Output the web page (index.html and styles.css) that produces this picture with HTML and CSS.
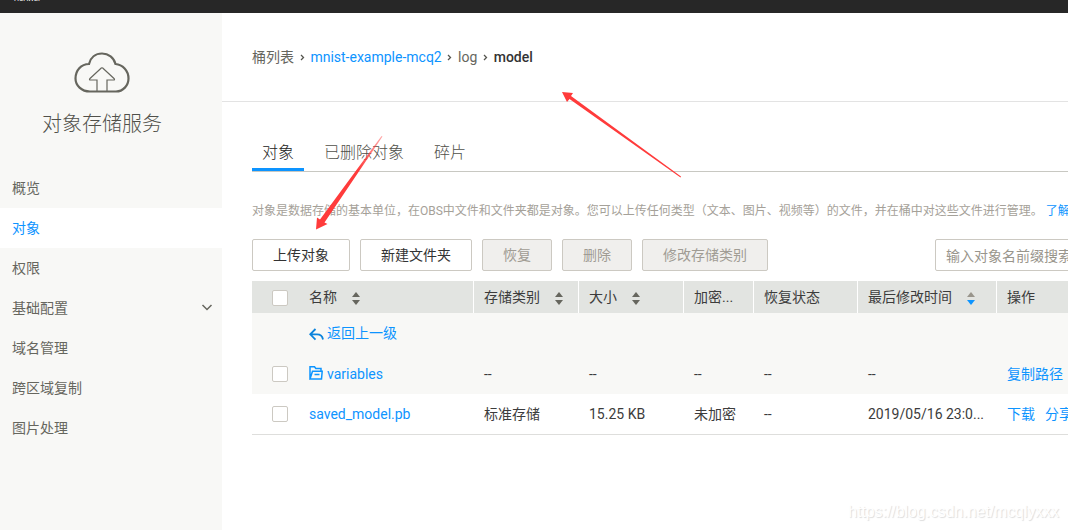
FILE: index.html
```
<!DOCTYPE html>
<html lang="zh-CN">
<head>
    <meta charset="UTF-8">
    <meta name="viewport" content="width=device-width, initial-scale=1.0">
    <title>对象存储服务</title>
    <link rel="stylesheet" href="styles.css">
</head>
<body>
    <header class="topbar"><span class="brand">HUAWEI</span></header>
    <div class="layout">
        <aside class="sidebar">
            <div class="service">
                <svg class="service-icon" width="58" height="44" viewBox="0 0 58 44" fill="none" stroke="#66665e">
                    <path d="M17 40.500h26C50 40.500 55.500 34.500 55.500 27.500C55.500 19.500 49.500 13.500 42.500 13C41 6.500 35.500 2.500 29 2.500S17.500 6.500 16 13C8 13 2.500 19.500 2.500 27.500C2.500 34.500 8.500 40.500 17 40.500z" stroke-width="2.200"/>
                    <path d="M24 40V29h-7q-1-.5 0-1.500L28.300 17q.7-.5 1.400 0L41 27.500q1 1 0 1.500H34v11" stroke-width="1.200"/>
                </svg>
                <h1>对象存储服务</h1>
            </div>
            <nav class="menu">
                <a class="menu-item">概览</a>
                <a class="menu-item active">对象</a>
                <a class="menu-item">权限</a>
                <a class="menu-item">基础配置
                    <svg width="12" height="8" viewBox="0 0 12 8" fill="none" stroke="#66665e" stroke-width="1.500"><path d="M1.500 1L6 5.500l4.500-4.500"/></svg>
                </a>
                <a class="menu-item">域名管理</a>
                <a class="menu-item">跨区域复制</a>
                <a class="menu-item">图片处理</a>
            </nav>
        </aside>
        <main class="content">
            <div class="breadcrumb">
                <span>桶列表</span>
                <svg class="sep" width="5" height="7" viewBox="0 0 5 7"><path d="M1 1l2.500 2.500L1 6"/></svg>
                <a class="link">mnist-example-mcq2</a>
                <svg class="sep" width="5" height="7" viewBox="0 0 5 7"><path d="M1 1l2.500 2.500L1 6"/></svg>
                <span>log</span>
                <svg class="sep" width="5" height="7" viewBox="0 0 5 7"><path d="M1 1l2.500 2.500L1 6"/></svg>
                <span class="current">model</span>
            </div>
            <div class="panel">
                <div class="tabs">
                    <a class="tab active">对象</a>
                    <a class="tab">已删除对象</a>
                    <a class="tab">碎片</a>
                </div>
                <p class="hint">对象是数据存储的基本单位，在OBS中文件和文件夹都是对象。您可以上传任何类型（文本、图片、视频等）的文件，并在桶中对这些文件进行管理。 <a class="link">了解更多</a></p>
                <div class="toolbar">
                    <button class="btn btn-upload">上传对象</button>
                    <button class="btn btn-folder">新建文件夹</button>
                    <button class="btn btn-small" disabled>恢复</button>
                    <button class="btn btn-small" disabled>删除</button>
                    <button class="btn btn-class" disabled>修改存储类别</button>
                    <input class="search" type="text" placeholder="输入对象名前缀搜索">
                </div>
                <table class="objects">
                    <colgroup>
                        <col class="col-check"><col class="col-name"><col class="col-class"><col class="col-size"><col class="col-enc"><col class="col-restore"><col class="col-time"><col class="col-ops">
                    </colgroup>
                    <thead>
                        <tr>
                            <th class="check"><span class="checkbox"></span></th>
                            <th>名称<span class="sort"></span></th>
                            <th>存储类别<span class="sort"></span></th>
                            <th>大小<span class="sort"></span></th>
                            <th>加密...</th>
                            <th>恢复状态</th>
                            <th>最后修改时间<span class="sort desc"></span></th>
                            <th>操作</th>
                        </tr>
                    </thead>
                    <tbody>
                        <tr class="shaded">
                            <td></td>
                            <td colspan="7">
                                <a class="link entry">
                                    <svg class="back-icon" width="15" height="13" viewBox="0 0 15 13" fill="none" stroke="#0b83dc" stroke-width="1.800"><path d="M6.500 1L1.200 6.300l5.300 5.300M1.500 6.300H8c3.500 0 5.500 2 6 5.200"/></svg>
                                    返回上一级
                                </a>
                            </td>
                        </tr>
                        <tr class="shaded folder-row">
                            <td class="check"><span class="checkbox"></span></td>
                            <td>
                                <a class="link entry">
                                    <svg class="folder-icon" width="14" height="14" viewBox="0 0 14 14" fill="none" stroke="#0d94ff" stroke-width="1.500"><path d="M1 13V.8h4.500l1.300 1.700H12V5M1 13L3.500 5.300h9.700L12.500 13zM5.500 8.500h5"/></svg>
                                    variables
                                </a>
                            </td>
                            <td>--</td>
                            <td>--</td>
                            <td>--</td>
                            <td>--</td>
                            <td>--</td>
                            <td><a class="link">复制路径</a></td>
                        </tr>
                        <tr class="file-row">
                            <td class="check"><span class="checkbox"></span></td>
                            <td><a class="link">saved_model.pb</a></td>
                            <td>标准存储</td>
                            <td>15.25 KB</td>
                            <td>未加密</td>
                            <td>--</td>
                            <td>2019/05/16 23:0...</td>
                            <td><a class="link op">下载</a><a class="link op">分享</a></td>
                        </tr>
                    </tbody>
                </table>
            </div>
        </main>
    </div>
    <svg class="arrows" width="1068" height="530" viewBox="0 0 1068 530">
        <defs>
            <linearGradient id="fade" gradientUnits="userSpaceOnUse" x1="358" y1="170" x2="384" y2="135">
                <stop offset="0" stop-color="#ff3b3b"/>
                <stop offset="1" stop-color="#ff3b3b" stop-opacity=".4"/>
            </linearGradient>
        </defs>
        <path fill="#ff3b3b" d="M562 92l11 1-2 3L681 176.500l-.5 1L569.500 99l-2.500 3z"/>
        <path fill="url(#fade)" d="M316 229.500l1-12 3 2L381.500 136l1 .5L324.500 222.500l3 1.500z"/>
    </svg>
    <div class="watermark">https://blog.csdn.net/mcqlyxxx</div>
</body>
</html>
```
FILE: styles.css
```
* {
    box-sizing: border-box;
}
body {
    margin: 0;
    height: 530px;
    overflow: hidden;
    background: #fff;
    color: #3c3c3c;
    font: 14px/20px Roboto, "Noto Sans CJK SC", sans-serif;
}
.topbar {
    height: 13px;
    background: #272727;
    overflow: hidden;
}
.brand {
    display: block;
    margin: -5px 0 0 14px;
    color: #fff;
    font-size: 7px;
    line-height: 8px;
}
.layout {
    display: flex;
    height: 517px;
}
.sidebar {
    flex: 0 0 222px;
    background: #f8f8f6;
    color: #66665e;
}
.service {
    display: flex;
    flex-direction: column;
    align-items: center;
    height: 155px;
    padding: 38px 18px 0 0;
}
.service h1 {
    margin: 14px 0 0;
    color: #50504a;
    font-size: 20px;
    font-weight: 300;
    line-height: 30px;
}
.menu-item {
    display: flex;
    align-items: center;
    justify-content: space-between;
    height: 40px;
    padding: 0 9px 0 12px;
}
.menu-item.active {
    background: #fff;
    color: #0d94ff;
}
.link {
    color: #0d94ff;
}
.content {
    flex: 1;
    min-width: 0;
    overflow: hidden;
}
.breadcrumb {
    display: flex;
    align-items: center;
    gap: 5.7px;
    height: 89px;
    padding-left: 30px;
    border-bottom: 1px solid #e3e3e3;
    color: #66665e;
}
.breadcrumb .current {
    color: #333;
    font-weight: 500;
}
.sep {
    fill: none;
    stroke: #55554f;
    stroke-width: 1.3;
}
.panel {
    width: 1000px;
    padding: 32px 0 0 30px;
}
.tabs {
    display: flex;
    gap: 10px;
    height: 38px;
    border-bottom: 1px solid #c8c8c2;
    font-size: 16px;
    font-weight: 300;
    color: #50504a;
}
.tab {
    height: 37px;
    padding: 9px 10px 0;
}
.tab.active {
    border-bottom: 3px solid #0d94ff;
    color: #222;
}
.hint {
    margin: 29px 0 18px;
    color: #a5a199;
    font-size: 12px;
    white-space: nowrap;
}
.toolbar {
    display: flex;
    gap: 10px;
    margin-bottom: 10px;
}
.btn,
.search {
    height: 32px;
    padding: 0;
    border: 1px solid #ccc9c2;
    border-radius: 2px;
    background: #fff;
    color: #333;
    font: inherit;
}
.btn:disabled {
    background: #f0efed;
    color: #a09c94;
}
.btn-upload {
    width: 98px;
}
.btn-folder {
    width: 112px;
}
.btn-small {
    width: 70px;
}
.btn-class {
    width: 126px;
}
.search {
    width: 200px;
    margin-left: 157px;
    padding: 2px 10px 0;
}
.search::placeholder {
    color: #99958c;
}
.objects {
    width: 970px;
    table-layout: fixed;
    border-collapse: separate;
    border-spacing: 0;
}
.col-check {
    width: 47px;
}
.col-name {
    width: 175px;
}
.col-class,
.col-size {
    width: 105px;
}
.col-enc {
    width: 70px;
}
.col-restore {
    width: 104px;
}
.col-time {
    width: 139px;
}
.objects th,
.objects td {
    padding: 0 0 0 10px;
    text-align: left;
    white-space: nowrap;
}
.objects th {
    height: 32px;
    background: #e2e4e1;
    font-weight: 400;
    box-shadow: inset -1px 0 #fff;
}
.objects td {
    height: 40px;
}
.objects .check {
    padding-left: 20px;
    box-shadow: none;
}
.objects th.check {
    padding-top: 2px;
}
.objects .folder-row td {
    height: 41px;
}
.objects .file-row td {
    height: 41px;
    border-bottom: 1px solid #dededc;
}
.shaded {
    background: #f8f8f6;
}
.checkbox {
    display: block;
    width: 16px;
    height: 16px;
    border: 1px solid #ccc9c2;
    border-radius: 2px;
    background: #fff;
}
.sort {
    display: inline-grid;
    gap: 3px;
    margin-left: 15px;
    vertical-align: middle;
}
.sort::before,
.sort::after {
    content: "";
    border: 4px solid transparent;
}
.sort::before {
    border-top: 0;
    border-bottom: 5px solid #66665e;
}
.sort::after {
    border-bottom: 0;
    border-top: 5px solid #66665e;
}
.sort.desc::before {
    border-bottom-color: #99958c;
}
.sort.desc::after {
    border-top-color: #0d94ff;
}
.entry {
    display: flex;
    align-items: center;
    gap: 4px;
}
.back-icon {
    margin: 2px -1px 0 0;
}
.folder-icon {
    margin-bottom: 2px;
}
.op {
    margin-right: 10px;
}
/* annotation arrows lie over the whole page */
.arrows {
    position: absolute;
    top: 0;
    left: 0;
    pointer-events: none;
}
.watermark {
    position: absolute;
    right: 9px;
    bottom: 8px;
    color: #fff;
    font: 15.8px/20px "Liberation Sans", Arial, sans-serif;
    text-shadow: 1px 1px 1px #dcdcdc;
}
```
